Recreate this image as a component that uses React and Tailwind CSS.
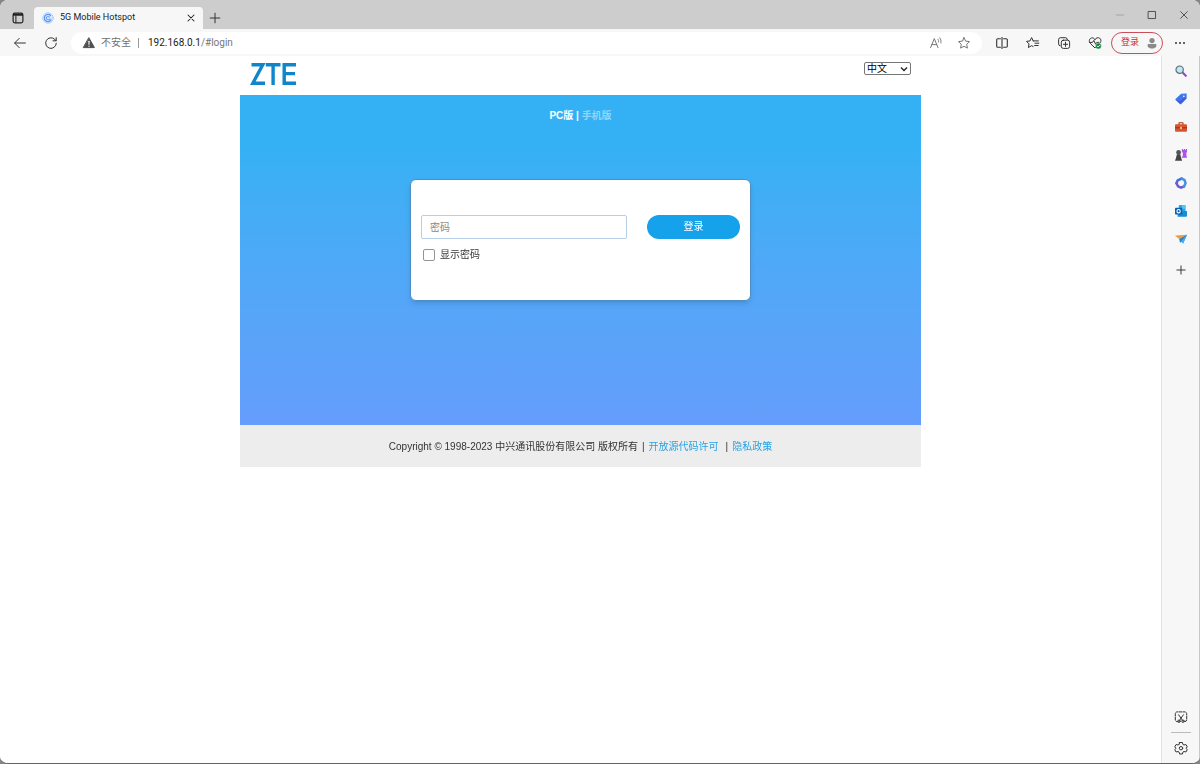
import React, { useState } from "react";

const S = ({ children, size = "size-4", ...rest }) => (
  <svg
    viewBox="0 0 16 16"
    className={`${size} shrink-0`}
    fill="none"
    stroke="currentColor"
    strokeWidth="1"
    strokeLinecap="round"
    strokeLinejoin="round"
    aria-hidden="true"
    {...rest}
  >
    {children}
  </svg>
);

const STAR = "M8 2.6l1.7 3.5 3.8.5-2.8 2.7.7 3.8L8 11.3l-3.4 1.8.7-3.8-2.8-2.7 3.8-.5z";

const WorkspaceIcon = () => (
  <S>
    <rect x="3.1" y="3.1" width="9.8" height="9.8" rx="1.8" strokeWidth="1.2" />
    <path d="M3.5 4.4h9M3.5 5.2h9" strokeWidth="1.1" />
    <path d="M5.9 6v6.6" strokeWidth="1" />
  </S>
);
const Favicon = () => (
  <S size="size-3">
    <circle cx="8" cy="8" r="7" stroke="#a9cbfb" strokeWidth="1.2" fill="#dceafe" />
    <path d="M11.4 4.6A4.8 4.8 0 1 0 12 10.6" stroke="#5b97f3" strokeWidth="1.7" />
    <path d="M9.8 6.8A2.2 2.2 0 1 0 10 9.2h1" stroke="#6ca2f5" strokeWidth="1.4" />
  </S>
);
const BackIcon = () => <S><path d="M13.4 8H2.8M7.2 3.4L2.6 8l4.6 4.6" /></S>;
const RefreshIcon = () => (
  <S><path d="M13.3 8.2A5.3 5.3 0 1 1 11.6 4.2L13 5.6M13.2 2.6v3.2H10" /></S>
);
const WarningIcon = () => (
  <S>
    <path d="M8 3L13.4 12.6H2.6z" fill="#4f4f4f" stroke="#4f4f4f" />
    <path d="M8 6.2v3" stroke="#fff" strokeWidth="1.1" />
    <path d="M8 11.1v.1" stroke="#fff" strokeWidth="1.3" />
  </S>
);
const ReadAloudIcon = () => (
  <S>
    <path d="M2.6 12.6L6.3 3.6 10 12.6M3.9 9.6h4.8" />
    <path d="M10 4.2q1 1.2.7 2.8M11.8 2.7q1.9 2.2 1.2 5.2" strokeWidth=".9" />
  </S>
);
const StarIcon = () => <S><path d={STAR} /></S>;
const SplitIcon = () => (
  <S>
    <path d="M6.4 3.7H3.8A1.1 1.1 0 0 0 2.7 4.8v6.4a1.1 1.1 0 0 0 1.1 1.1h2.6M9.6 3.7h2.6a1.1 1.1 0 0 1 1.1 1.1v6.4a1.1 1.1 0 0 1-1.1 1.1H9.6" strokeWidth="1.1" />
    <path d="M8 2.6v10.8" strokeWidth="1.1" />
  </S>
);
const FavoritesIcon = () => (
  <S>
    <path d="M8.2 5.9L6.6 2.6 5 5.9l-3.500.500L4 8.900l-.6 3.600 3.200-1.800 1.500.8M8.200 5.900h5.200M10 8.200h3.800M9.600 10.500h3.600" />
  </S>
);
const CollectionsIcon = () => (
  <S>
    <path d="M11.4 4.7A2 2 0 0 0 9.5 2.7H4.6a2 2 0 0 0-2 2v4.2a2 2 0 0 0 1.6 2" />
    <rect x="5.3" y="5.2" width="8.3" height="8.2" rx="2" />
    <path d="M9.5 7.2v4.2M7.4 9.3h4.2" />
  </S>
);
const HealthIcon = () => (
  <S>
    <path d="M8 4.4C6.7 2.4 4 2.3 2.8 4.2 1.9 5.8 2.3 7.4 3.6 8.7L8 13l5.1-5.2c1.2-1.5 1-3.5-.3-4.5C11.2 2.2 9.2 2.6 8 4.4z" />
    <path d="M2.6 7.4h2.9l1.3-2 1.8 3.8 1.2-1.8h2" />
    <circle cx="11.4" cy="11" r="3" fill="#138a3c" stroke="#fff" strokeWidth=".4" />
    <path d="M10.1 11l1 1 1.7-1.9" stroke="#fff" strokeWidth=".8" />
  </S>
);
const PersonIcon = () => (
  <S size="size-3">
    <g fill="#8a8a8a" stroke="none">
      <circle cx="8" cy="4.8" r="3.5" />
      <path d="M2.4 9.2h11.2c1.2 4-1.6 6-5.6 6s-6.8-2-5.6-6z" />
    </g>
  </S>
);
const MoreIcon = () => (
  <S>
    <g fill="currentColor" stroke="none">
      <circle cx="4" cy="8" r="1" /><circle cx="8" cy="8" r="1" /><circle cx="12" cy="8" r="1" />
    </g>
  </S>
);
const CloseIcon = () => <S size="size-3"><path d="M4 4l8 8M12 4l-8 8" strokeWidth="1.4" /></S>;
const PlusIcon = () => <S><path d="M8 3.2v9.6M3.2 8h9.6" /></S>;

const SearchIcon = () => (
  <S size="size-3">
    <path d="M9.8 9.8L14.4 14.4" stroke="#9a45c9" strokeWidth="2.8" />
    <circle cx="6.2" cy="6.2" r="4.9" stroke="#5c6b75" strokeWidth="1.5" fill="#bfe7f4" />
  </S>
);
const TagIcon = () => (
  <S size="size-3">
    <path d="M8.8 1.8L14.6 1.4 14.7 7 7.4 14.2 1.3 8.8z" fill="#3f76ee" stroke="#3f76ee" strokeWidth="1.8" />
    <path d="M1.3 8.8L7.4 14.2 14.7 7 13 5.5 7 11z" fill="#4a54d8" stroke="none" />
    <circle cx="11.8" cy="4.4" r="1.1" fill="#fff" stroke="none" />
  </S>
);
const ToolboxIcon = () => (
  <S size="size-3">
    <path d="M5.4 4.5V2.4h5.2v2.1" stroke="#9b3b22" strokeWidth="1.5" />
    <rect x="0" y="4.4" width="16" height="10" rx="1.4" fill="#d9532f" stroke="none" />
    <path d="M0 8.4h16v1.4H0z" fill="#922f1d" stroke="none" />
    <path d="M6.8 7.8h2.4v2.800H6.800z" fill="#f2c3a0" stroke="none" />
  </S>
);
const ChessIcon = () => (
  <S size="size-3">
    <g stroke="none">
      <path d="M9.2 0h1.7v1.400h1V0h1.800v1.400h1V0H16v4.200l-1 .8.400 5h.6v1.800H9.200V10h1l.400-5-1.400-.8z" fill="#b052ea" />
      <circle cx="4.800" cy="4.600" r="3.200" fill="#555" />
      <path d="M2.600 7h4.400l1.400 5.400L9.400 15.600H0L1.200 12.400z" fill="#444" />
    </g>
  </S>
);
const M365Icon = () => (
  <S size="size-3">
    <path d="M9 2L3.600 4.400 2 8.400" stroke="#3f6fe0" strokeWidth="3.400" />
    <path d="M2 8.400l2 4L8 14.200l4-1.600" stroke="#6f58d2" strokeWidth="3.400" />
    <path d="M9 2l3.800 2.200 1.300 4.200-2.100 4.200" stroke="#4a8fe6" strokeWidth="3.400" />
  </S>
);
const OutlookIcon = () => (
  <S size="size-3">
    <g stroke="none">
      <rect x="5" y="0" width="9" height="10" rx="1" fill="#2aa5e8" />
      <path d="M9.5 0H13a1 1 0 0 1 1 1v4H9.500z" fill="#55c6f5" />
      <path d="M3.500 15.500V9L16 8v6.300a1.200 1.200 0 0 1-1.200 1.200z" fill="#168bd8" />
      <rect x="0" y="3.800" width="9.600" height="9" rx="1" fill="#0b60b4" />
    </g>
    <circle cx="4.800" cy="8.300" r="2.200" stroke="#fff" strokeWidth="1.400" />
  </S>
);
const DropIcon = () => (
  <S size="size-3">
    <g stroke="none">
      <path d="M0 3.200L16 2.200 5.800 8.400z" fill="#e5a13d" />
      <path d="M16 2.200L10.800 14 5.800 8.400z" fill="#2d8de0" />
      <path d="M5.800 8.400L16 2.200 6.800 13.400z" fill="#2f7cc8" />
      <path d="M16 2.200L8.200 10.900 10.800 14z" fill="#43aef2" />
    </g>
  </S>
);
const ScreenshotIcon = () => (
  <S>
    <path d="M5 12.6H4A1.8 1.8 0 0 1 2.3 10.8V4.6A1.8 1.8 0 0 1 4 2.9h8a1.8 1.8 0 0 1 1.7 1.7v6.2a1.8 1.8 0 0 1-1.7 1.8h-1" strokeDasharray="2.4 1.2" />
    <path d="M5.600 5.800l3.800 5.400M10.400 5.800l-3.800 5.400" />
    <circle cx="6" cy="12.200" r="1.200" /><circle cx="10" cy="12.200" r="1.200" />
  </S>
);
const GearIcon = () => (
  <S>
    <path d="M6.600 2.500h2.800l.5 1.900 1.100.6 1.900-.5 1.400 2.400L12.900 8.300l1.400 1.300-1.400 2.400-1.900-.5-1.100.6-.5 1.900H6.600l-.5-1.900L5 11.500l-1.900.5-1.400-2.400L3.100 8.300 1.700 6.900l1.400-2.400L5 5l1.100-.6z" />
    <circle cx="8" cy="8.200" r="1.700" />
  </S>
);

const ZteLogo = () => (
  <svg viewBox="0 0 47 24" className="h-6 w-[47px]" fill="none" stroke="#0f86cc" strokeWidth="3.4" role="img" aria-label="ZTE">
    <path d="M1.500 2.700H12.800L2.800 21.300H15" strokeLinejoin="miter" strokeMiterlimit="2" />
    <path d="M15.800 2.700H30.500M23.100 2.700V23" />
    <path d="M46 2.700H34.200V21.300H46M34.200 11.600H45" />
  </svg>
);

const toolbarItems = [
  ["分屏", SplitIcon],
  ["收藏夹", FavoritesIcon],
  ["集锦", CollectionsIcon],
  ["浏览器概要", HealthIcon],
];
const sidebarItems = [
  ["搜索", SearchIcon],
  ["购物", TagIcon],
  ["工具", ToolboxIcon],
  ["游戏", ChessIcon],
  ["Microsoft 365", M365Icon],
  ["Outlook", OutlookIcon],
  ["Drop", DropIcon],
];

function TabStrip() {
  return (
    <div className="flex h-[29px] items-end bg-[#cdcdcd]">
      <button aria-label="标签页操作" className="flex h-[22px] w-[34px] items-center justify-center pl-0.5 text-[#222]">
        <WorkspaceIcon />
      </button>
      <div className="flex h-[22px] w-[169px] items-center rounded-t bg-[#f7f7f7] pr-1.5 pl-2 text-[#222]">
        <Favicon />
        <span className="ml-1.5 flex-1 text-[9px] whitespace-nowrap">5G Mobile Hotspot</span>
        <button aria-label="关闭标签页"><CloseIcon /></button>
      </div>
      <button aria-label="新建标签页" className="flex h-[22px] w-6 items-center justify-center text-[#333]"><PlusIcon /></button>
      <div className="ml-auto flex h-full text-[#444]">
        <button aria-label="最小化" className="flex w-8 items-center justify-center text-[#999]">
          <S size="size-3"><path d="M3 8h10" /></S>
        </button>
        <button aria-label="最大化" className="flex w-8 items-center justify-center">
          <S size="size-3"><rect x="3.300" y="3.300" width="9.400" height="9.400" strokeWidth="1.200" /></S>
        </button>
        <button aria-label="关闭" className="flex w-8 items-center justify-center">
          <S size="size-3"><path d="M3.500 3.500l9 9M12.500 3.500l-9 9" strokeWidth="1.200" /></S>
        </button>
      </div>
    </div>
  );
}

function Toolbar() {
  return (
    <div className="flex h-[27px] items-center bg-[#f7f7f7] text-[#333]">
      <button aria-label="返回" className="ml-3"><BackIcon /></button>
      <button aria-label="刷新" className="ml-[15px]"><RefreshIcon /></button>
      <div className="ml-3 flex h-[22px] flex-1 items-center rounded-full bg-white pr-2.5 pl-2.5 text-[10px]">
        <WarningIcon />
        <span className="ml-1 text-[#707070]">不安全</span>
        <span className="mr-[9px] ml-[7px] h-2.5 w-px bg-[#999]" />
        <span className="flex-1 text-[#222]">192.168.0.1<span className="text-[#777]">/#login</span></span>
        <button aria-label="大声朗读" className="text-[#777]"><ReadAloudIcon /></button>
        <button aria-label="添加到收藏夹" className="ml-3 text-[#777]"><StarIcon /></button>
      </div>
      <div className="ml-1 flex">
        {toolbarItems.map(([label, Icon]) => (
          <button key={label} aria-label={label} className="flex w-[31px] justify-center"><Icon /></button>
        ))}
      </div>
      <button className="ml-px flex h-[22px] w-[52px] items-center justify-between rounded-full border border-[#c8505a] pr-1 pl-[9px] text-[9px] text-[#c42b38]">
        登录<PersonIcon />
      </button>
      <button aria-label="更多" className="flex w-[34px] justify-center"><MoreIcon /></button>
      <span className="w-[3px]" />
    </div>
  );
}

function Sidebar() {
  return (
    <aside className="flex w-[39px] shrink-0 flex-col items-center border-r border-l border-r-[#c8c8c8] border-l-[#e3e3e3] bg-[#f7f7f7] pt-px text-[#333]">
      <div className="flex flex-col">
        {sidebarItems.map(([label, Icon]) => (
          <button key={label} aria-label={label} className="flex h-7 items-center justify-center"><Icon /></button>
        ))}
        <button aria-label="自定义" className="mt-[3px] flex h-7 items-center justify-center">
          <S size="size-3"><path d="M8 2.500v11M2.500 8h11" strokeWidth="1.300" /></S>
        </button>
      </div>
      <div className="mt-auto flex flex-col items-center">
        <button aria-label="屏幕截图"><ScreenshotIcon /></button>
        <span className="my-[7px] h-px w-5 bg-[#bbb]" />
        <button aria-label="设置" className="mb-[7px]"><GearIcon /></button>
      </div>
    </aside>
  );
}

function LoginPage() {
  const [password, setPassword] = useState("");
  const [show, setShow] = useState(false);
  return (
    <main className="flex-1 bg-white font-['Liberation_Sans','Noto_Sans_CJK_SC',sans-serif] text-[10px] leading-4 text-[#333]">
      <div className="mx-auto w-full max-w-[681px]">
        <header className="flex h-[39px] items-start justify-between pt-1.5 pr-2.5 pl-2.5">
          <ZteLogo />
          <div className="grid h-[13px] w-[47px] items-center">
            <select
              aria-label="语言"
              defaultValue="zh"
              className="col-start-1 row-start-1 h-[13px] appearance-none rounded-xs border border-[#767676] bg-white px-0.5 text-[10px] leading-[11px] text-black"
            >
              <option value="zh">中文</option>
              <option value="en">English</option>
            </select>
            <svg viewBox="0 0 8 8" className="pointer-events-none col-start-1 row-start-1 mr-[3px] size-2 justify-self-end" fill="none" stroke="#222" strokeWidth="1.300" aria-hidden="true">
              <path d="M1 2.500l3 3 3-3" />
            </svg>
          </div>
        </header>
        <section className="bg-linear-to-b from-[#34b1f4] from-15% to-[#659dfc] px-4 pt-[13px] pb-[124px]">
          <p className="text-center font-bold text-white">
            PC版 | <a href="#mobile" className="text-[#93d4fa]">手机版</a>
          </p>
          <form
            onSubmit={(e) => e.preventDefault()}
            className="mx-auto mt-[55px] w-full max-w-[341px] rounded-md border border-[#4d8fc4] bg-white px-2.5 pt-[35px] pb-[37px] shadow-md"
          >
            <div className="flex items-center justify-between gap-5">
              <input
                aria-label="密码"
                placeholder="密码"
                autoFocus
                type={show ? "text" : "password"}
                value={password}
                onChange={(e) => setPassword(e.target.value)}
                className="h-6 min-w-0 flex-1 rounded-xs border border-[#b5cfe8] px-2 outline-none placeholder:text-[#888]"
              />
              <button type="submit" className="h-6 w-[93px] rounded-full bg-[#16a2ea] text-white">登录</button>
            </div>
            <label className="mt-2 ml-0.5 flex items-center gap-[5px]">
              <input
                type="checkbox"
                checked={show}
                onChange={(e) => setShow(e.target.checked)}
                className="size-3 appearance-none rounded-xs border border-[#949494] bg-white checked:bg-[#16a2ea]"
              />
              显示密码
            </label>
          </form>
        </section>
        <footer className="flex flex-wrap items-center justify-center bg-[#ededed] pt-3.5 pb-3">
          <span>Copyright © 1998-2023 中兴通讯股份有限公司 版权所有</span>
          <span className="mx-1">|</span>
          <a href="#opensource" className="text-[#28a2e3]">开放源代码许可</a>
          <span className="mr-1 ml-[7px]">|</span>
          <a href="#privacy" className="text-[#28a2e3]">隐私政策</a>
        </footer>
      </div>
    </main>
  );
}

export default function App() {
  return (
    <div className="min-h-screen bg-[#858585] font-['Roboto','Noto_Sans_CJK_SC',sans-serif]">
      <div className="flex min-h-screen flex-col overflow-hidden rounded-lg border-b border-[#5d6465] bg-[#f7f7f7]">
        <TabStrip />
        <Toolbar />
        <div className="flex flex-1">
          <LoginPage />
          <Sidebar />
        </div>
      </div>
    </div>
  );
}
